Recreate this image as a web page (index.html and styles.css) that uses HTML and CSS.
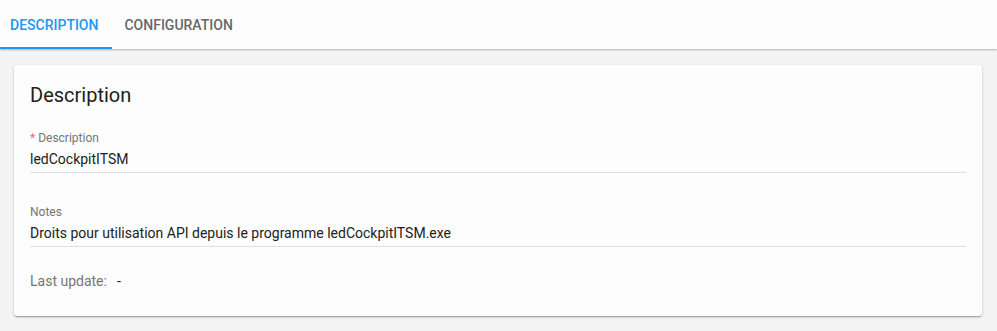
FILE: index.html
```html
<!DOCTYPE html>
<html lang="fr">
<head>
<meta charset="utf-8">
<title>Description</title>
<link rel="stylesheet" href="styles.css">
</head>
<body>
<header class="tabbar">
  <nav class="tabs">
    <a class="tab tab-active">Description</a>
    <a class="tab">Configuration</a>
  </nav>
</header>
<main class="content">
  <section class="card">
    <h2 class="card-title">Description</h2>
    <div class="field">
      <label class="field-label"><span class="req">*</span> Description</label>
      <div class="field-value">ledCockpitITSM</div>
    </div>
    <div class="field field-last">
      <label class="field-label">Notes</label>
      <div class="field-value">Droits pour utilisation API depuis le programme ledCockpitITSM.exe</div>
    </div>
    <div class="meta">
      <span class="meta-label">Last update:</span>
      <span class="meta-value">-</span>
    </div>
  </section>
</main>
</body>
</html>
```
FILE: styles.css
```css
html, body {
  margin: 0;
  padding: 0;
}
body {
  background: #f4f4f4;
  font-family: Roboto, "Liberation Sans", Arial, sans-serif;
  color: #212121;
  height: 331px;
  overflow: hidden;
}
.tabbar {
  background: #fdfdfd;
  height: 49px;
  box-shadow: 0 1px 2px rgba(0, 0, 0, 0.28);
  position: relative;
  z-index: 1;
}
.tabs {
  display: flex;
  height: 49px;
}
.tab {
  display: flex;
  align-items: center;
  padding: 2px 12px 0 12px;
  font-size: 14px;
  font-weight: 500;
  text-transform: uppercase;
  color: #686868;
  box-sizing: border-box;
  height: 49px;
  border-bottom: 2px solid transparent;
}
.tab-active {
  color: #2196f3;
  border-bottom-color: #2196f3;
  padding-left: 10px;
  padding-right: 14px;
}
.content {
  padding: 16px 15px 0 14px;
}
.card {
  background: #fdfdfd;
  border-radius: 3px;
  box-shadow: 0 1px 3px rgba(0, 0, 0, 0.2), 0 1px 1px rgba(0, 0, 0, 0.14), 0 2px 1px -1px rgba(0, 0, 0, 0.12);
  padding: 16px 16px 25px 16px;
}
.card-title {
  margin: 0 0 21px 0;
  font-size: 20px;
  line-height: 28px;
  font-weight: 400;
  color: #212121;
}
.field {
  margin-bottom: 31px;
}
.field-last {
  margin-bottom: 24px;
}
.field-label {
  display: block;
  font-size: 12px;
  line-height: 16px;
  color: #757575;
  margin-bottom: 3px;
}
.req {
  color: #e57373;
}
.field-value {
  font-size: 14px;
  line-height: 20px;
  padding-bottom: 3px;
  border-bottom: 1px solid #e0e0e0;
  color: #212121;
}
.meta {
  display: flex;
  gap: 10px;
  font-size: 14px;
  line-height: 20px;
}
.meta-label {
  color: #757575;
}
.meta-value {
  color: #212121;
}
```
